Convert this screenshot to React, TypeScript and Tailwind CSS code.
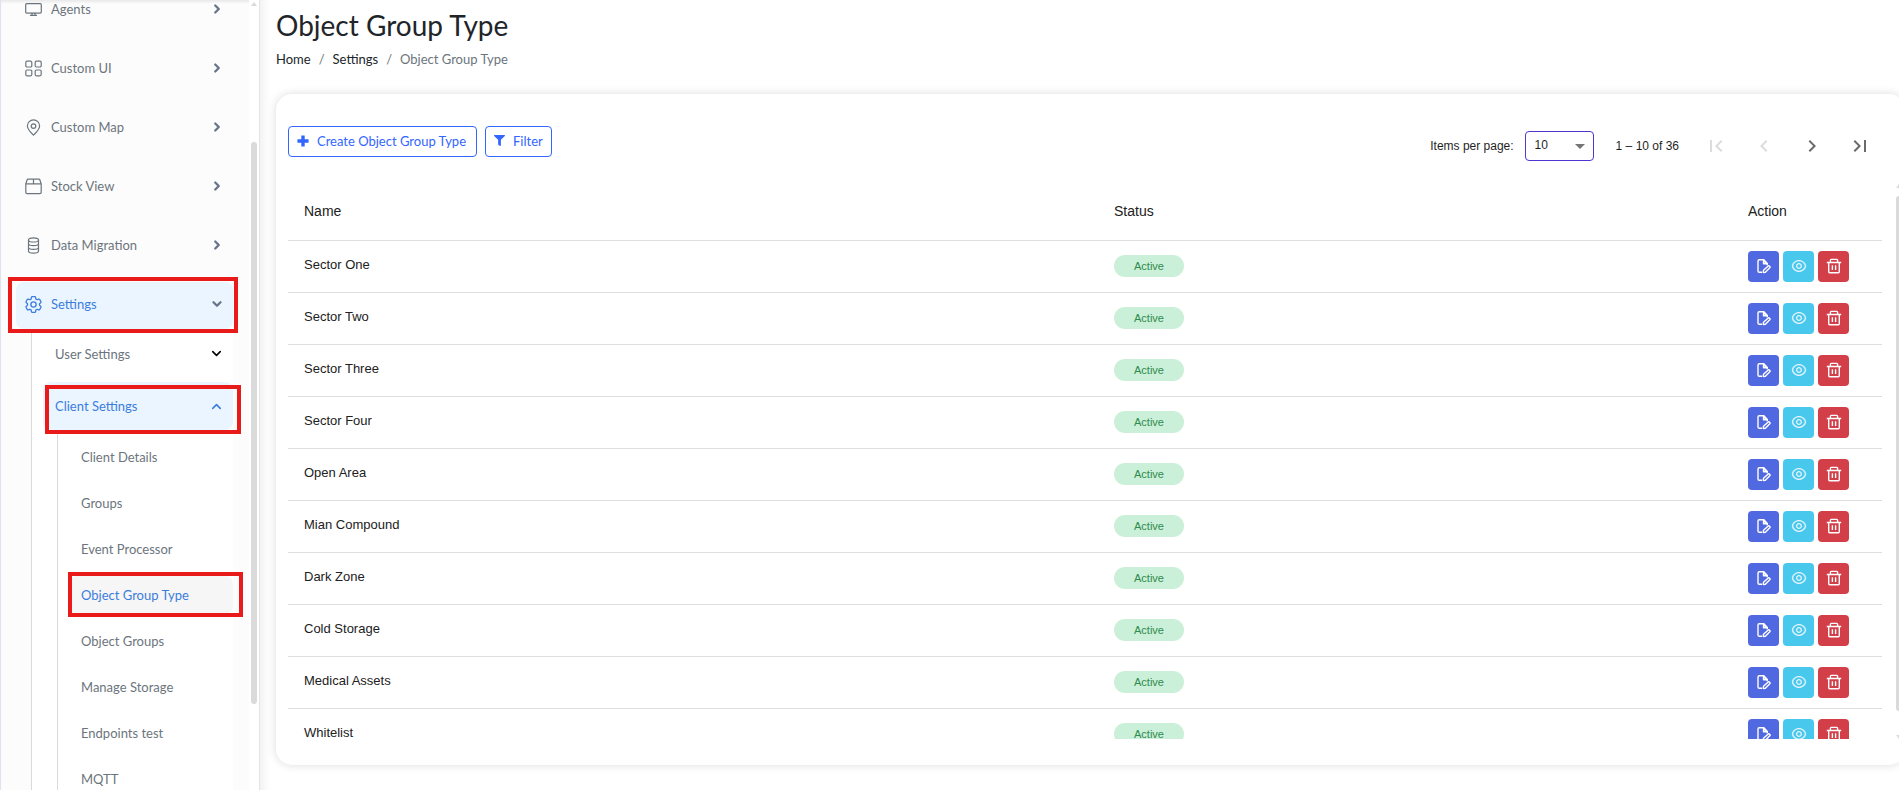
import type { ReactNode } from "react";
import { HiOutlineCog6Tooth } from "react-icons/hi2";
import { RiEyeLine } from "react-icons/ri";
import { FiChevronRight, FiChevronDown, FiChevronUp } from "react-icons/fi";
import { FaFilter } from "react-icons/fa";
import { MdChevronLeft, MdChevronRight, MdFirstPage, MdLastPage, MdArrowDropDown } from "react-icons/md";

function LineIcon({ children }: { children: ReactNode }) {
    return (
        <svg viewBox="0 0 17 17" className="size-[17px] shrink-0" fill="none" stroke="currentColor" strokeWidth="1.2" strokeLinejoin="round" strokeLinecap="round">
            {children}
        </svg>
    );
}

const menu = [
    {
        label: "Agents",
        icon: (
            <LineIcon>
                <rect x=".7" y="2.7" width="15.6" height="9.4" rx="1" />
                <path d="M7 12.2v2M10 12.2v2M5.4 14.3h6.2" />
            </LineIcon>
        ),
    },
    {
        label: "Custom UI",
        icon: (
            <LineIcon>
                <rect x=".8" y="1.2" width="6" height="5.8" rx="1.2" />
                <rect x="10.2" y="1.2" width="6" height="5.8" rx="1.2" />
                <rect x=".8" y="10" width="6" height="5.8" rx="1.2" />
                <rect x="10.2" y="10" width="6" height="5.8" rx="1.2" />
            </LineIcon>
        ),
    },
    {
        label: "Custom Map",
        icon: (
            <LineIcon>
                <path d="M8.5 16.2C6.3 13.7 2.4 10.4 2.4 6.9a6.1 6.1 0 0 1 12.2 0c0 3.5-3.9 6.8-6.1 9.3z" />
                <circle cx="8.5" cy="7.1" r="2.3" />
            </LineIcon>
        ),
    },
    {
        label: "Stock View",
        icon: (
            <LineIcon>
                <path d="M.8 5.8v8.4c0 .9.5 1.4 1.4 1.4h12.6c.9 0 1.4-.5 1.4-1.4V5.8zM.8 5.8 2.2 1.8c.1-.4.4-.6.8-.6h11c.4 0 .7.2.8.6l1.4 4M8.5 1.2v4.6" />
            </LineIcon>
        ),
    },
    {
        label: "Data Migration",
        icon: (
            <LineIcon>
                <ellipse cx="8.5" cy="2.9" rx="5" ry="2.1" />
                <path d="M3.5 2.9v11.2c0 1.2 2.2 2.1 5 2.1s5-.9 5-2.1V2.9M3.5 6.600c0 1.2 2.2 2.1 5 2.1s5-.9 5-2.1M3.5 10.300c0 1.2 2.2 2.1 5 2.1s5-.9 5-2.1" />
            </LineIcon>
        ),
    },
];

const clientItems = [
    "Client Details",
    "Groups",
    "Event Processor",
    "Object Group Type",
    "Object Groups",
    "Manage Storage",
    "Endpoints test",
    "MQTT",
];

const rows = [
    "Sector One",
    "Sector Two",
    "Sector Three",
    "Sector Four",
    "Open Area",
    "Mian Compound",
    "Dark Zone",
    "Cold Storage",
    "Medical Assets",
    "Whitelist",
];

function PlusIcon() {
    return (
        <svg viewBox="0 0 12 12" className="size-3" fill="currentColor">
            <path d="M4.300.8c0-.2.200-.4.400-.4h2.600c.2 0 .4.200.4.400v3.500h3.500c.2 0 .4.200.4.400v2.600c0 .2-.2.400-.4.400H7.700v3.500c0 .2-.2.400-.4.400H4.700c-.2 0-.4-.2-.4-.4V7.700H.8c-.2 0-.4-.2-.4-.4V4.700c0-.2.200-.4.400-.4h3.500z" />
        </svg>
    );
}

function EditIcon() {
    return (
        <svg viewBox="0 0 16 16" className="size-4" fill="none" stroke="currentColor" strokeWidth="1.4" strokeLinejoin="round">
            <path d="M6 14.300H3.300c-.8 0-1.300-.5-1.300-1.300V3c0-.8.500-1.300 1.300-1.300h4.400l3.500 3.800v1.700" />
            <path d="M7.500 1.700v4h3.800z" fill="currentColor" fillOpacity=".6" />
            <path d="M7.200 14.500l.3-2.200 4.700-4.400c.8-.7 2.500.9 1.800 1.700l-4.600 4.600z" />
        </svg>
    );
}

function TrashIcon() {
    return (
        <svg viewBox="0 0 16 16" className="size-4" fill="none" stroke="currentColor" strokeWidth="1.4" strokeLinejoin="round">
            <path d="M.8 4.500h14.400M4.400 4.500V2.200c0-.5.300-.8.800-.8h5.600c.5 0 .8.300.8.800v2.300M2.700 4.500v9.200c0 .6.400 1 1 1h8.600c.6 0 1-.4 1-1V4.500" />
            <path d="M6.400 7.300v4.800M9.600 7.300v4.800" />
        </svg>
    );
}

function Highlight({ className }: { className: string }) {
    return <span className={`pointer-events-none absolute border-4 border-[#e81a1a] ${className}`} />;
}

function MenuItem({ label, icon, active }: { label: string; icon: ReactNode; active?: boolean }) {
    return (
        <a
            href="#"
            className={`relative flex h-[47px] items-center rounded-lg pb-[3px] pl-[9px] pr-[9px] ${active ? "bg-[#ebf5ff] text-[#3b7ddd]" : "text-[#6c757d]"}`}
        >
            {icon}
            <span className="ml-[9px] flex-1">{label}</span>
            {active ? (
                <FiChevronDown size={14} strokeWidth={4} className="text-[#66758a]" />
            ) : (
                <FiChevronRight size={14} strokeWidth={4} className="text-[#66758a]" />
            )}
            {active && <Highlight className="-top-[5px] -right-[5px] -bottom-1 -left-2" />}
        </a>
    );
}

function Sidebar() {
    return (
        <aside className="flex h-screen w-[260px] shrink-0 overflow-hidden border-r border-l border-r-[#e3e5ea] border-l-[#dfe3ef] bg-[#fcfcfc] text-[13px] leading-5 shadow-[inset_0_3px_3px_-1px_rgba(0,0,0,0.08)]">
            <nav className="-mt-[13px] flex-1 pl-[15px] pr-4">
                <div className="flex flex-col gap-3">
                    {menu.map((m) => (
                        <MenuItem key={m.label} label={m.label} icon={m.icon} />
                    ))}
                    <MenuItem
                        label="Settings"
                        icon={<span className="flex size-[17px] items-center justify-center"><HiOutlineCog6Tooth size={21} className="shrink-0" /></span>}
                        active
                    />
                </div>
                <div className="ml-[15px] border-l border-[#dadada] bg-white text-[#6c757d]">
                    <a href="#" className="flex h-[51px] items-center pl-[23px] pr-[9px] pb-[2px]">
                        <span className="flex-1">User Settings</span>
                        <FiChevronDown size={15} strokeWidth={2.500} className="text-black" />
                    </a>
                    <a href="#" className="relative mt-[2px] ml-[11px] flex h-12 items-center rounded-lg bg-[#ebf5ff] pl-3 pr-[9px] text-[#3b7ddd]">
                        <span className="flex-1">Client Settings</span>
                        <FiChevronUp size={15} strokeWidth={2.500} />
                        <Highlight className="top-[3px] -right-2 -bottom-1 left-[2px]" />
                    </a>
                    <ul className="mt-1 ml-[25px]">
                        {clientItems.map((item) => (
                            <li key={item} className="flex h-[46px] flex-col justify-center border-l border-[#dadada] pl-[11px]">
                                {item === "Object Group Type" ? (
                                    <a href="#" className="relative flex h-[38px] items-center rounded-lg bg-[#f6f6f6] pl-3 text-[#3b7ddd]">
                                        {item}
                                        <Highlight className="-top-1 -right-[10px] -bottom-[3px] -left-px" />
                                    </a>
                                ) : (
                                    <a href="#" className="flex h-[38px] items-center pl-3">{item}</a>
                                )}
                            </li>
                        ))}
                    </ul>
                </div>
            </nav>
            <div className="flex w-[10px] flex-col items-center bg-white pt-[2px]">
                <svg viewBox="0 0 6 4" className="h-1 w-[6px]"><path d="M0 4 3 0l3 4z" fill="#dadada" /></svg>
                <div className="mt-[136px] h-[562px] w-[6px] rounded-full bg-[#dadada]" />
            </div>
        </aside>
    );
}

function Paginator() {
    return (
        <div className="flex items-center font-['Liberation_Sans',Arial,sans-serif] text-[12px] text-[#1f1f1f]">
            <label htmlFor="page-size" className="mr-[11px]">Items per page:</label>
            <div className="relative">
                <select id="page-size" className="h-[30px] w-[69px] appearance-none rounded border border-[#4f35d2] bg-white pb-[2px] pl-[9px]">
                    <option>10</option>
                </select>
                <MdArrowDropDown size={24} className="pointer-events-none absolute top-[3px] right-[2px] text-[#757575]" />
            </div>
            <span className="mr-[13px] ml-[22px]">1 – 10 of 36</span>
            <button disabled aria-label="First page" className="flex size-12 items-center justify-center text-[#dcdcdc]"><MdFirstPage size={24} /></button>
            <button disabled aria-label="Previous page" className="flex size-12 items-center justify-center text-[#dcdcdc]"><MdChevronLeft size={24} /></button>
            <button aria-label="Next page" className="flex size-12 items-center justify-center text-[#6b6b6b]"><MdChevronRight size={24} /></button>
            <button aria-label="Last page" className="flex size-12 items-center justify-center text-[#6b6b6b]"><MdLastPage size={24} /></button>
        </div>
    );
}

function GroupTable() {
    return (
        <table className="w-full table-fixed border-collapse text-left font-['Liberation_Sans',Arial,sans-serif] text-[#212121]">
            <colgroup>
                <col />
                <col className="w-[634px]" />
                <col className="w-[150px]" />
            </colgroup>
            <thead>
                <tr className="h-14 border-b border-[#dedede] text-[14px]">
                    <th className="pl-4 font-normal">Name</th>
                    <th className="pl-4 font-normal">Status</th>
                    <th className="pl-4 font-normal">Action</th>
                </tr>
            </thead>
            <tbody>
                {rows.map((name) => (
                    <tr key={name} className="h-[52px] border-b border-[#dedede] text-[13px] leading-4">
                        <td className="pb-[2px] pl-4">{name}</td>
                        <td className="pl-4">
                            <span className="flex h-[22px] w-[70px] items-center justify-center rounded-full bg-[#cbf0d9] text-[11px] text-[#2f8a4c]">Active</span>
                        </td>
                        <td className="pl-4">
                            <div className="flex gap-1 text-white">
                                <button aria-label={`Edit ${name}`} className="flex size-[31px] items-center justify-center rounded bg-[#5068e0]"><EditIcon /></button>
                                <button aria-label={`View ${name}`} className="flex size-[31px] items-center justify-center rounded bg-[#49c8ee] text-[#dff3fa]"><RiEyeLine size={16} /></button>
                                <button aria-label={`Delete ${name}`} className="flex size-[31px] items-center justify-center rounded bg-[#d33f49]"><TrashIcon /></button>
                            </div>
                        </td>
                    </tr>
                ))}
            </tbody>
        </table>
    );
}

export default function App() {
    return (
        <div className="flex h-screen overflow-hidden bg-white font-['Lato',sans-serif]">
            <Sidebar />
            <main className="flex min-w-0 flex-1 flex-col overflow-hidden pb-[25px] pl-4 shadow-[inset_12px_0_12px_-10px_rgba(0,0,0,0.08)]">
                <h1 className="pt-2 text-[28px] leading-[34px] text-[#212529]">Object Group Type</h1>
                <ol className="mt-[7px] flex gap-2 text-[13px] leading-5 text-[#6c757d]">
                    <li><a href="#" className="text-[#212529]">Home</a></li>
                    <li>/</li>
                    <li><a href="#" className="text-[#212529]">Settings</a></li>
                    <li>/</li>
                    <li>Object Group Type</li>
                </ol>
                <section className="mt-[25px] -mr-[6px] flex min-h-0 flex-1 flex-col rounded-2xl bg-white pt-7 pb-[26px] pl-3 shadow-[0_0_10px_rgba(0,0,0,0.14)]">
                    <div className="flex items-start justify-between pr-[21px]">
                        <div className="flex gap-2 pt-1 text-[13px] leading-5 text-[#3366ff]">
                            <button className="flex h-[31px] items-center gap-2 rounded border border-[#3366ff] pr-[10px] pb-[2px] pl-2"><PlusIcon />Create Object Group Type</button>
                            <button className="flex h-[31px] items-center gap-2 rounded border border-[#3366ff] px-2 pb-[2px]"><FaFilter size={11} />Filter</button>
                        </div>
                        <Paginator />
                    </div>
                    <div className="mt-[14px] flex min-h-0 flex-1">
                        <div className="min-w-0 flex-1 overflow-hidden"><GroupTable /></div>
                        <div className="mr-[3px] ml-[14px] flex w-[6px] flex-col">
                            <svg viewBox="0 0 6 4" className="h-1 w-[6px]"><path d="M0 4 3 0l3 4z" fill="#dadada" /></svg>
                            <div className="mt-2 mb-6 flex-1 rounded-full bg-[#dadada]" />
                            <svg viewBox="0 0 6 4" className="h-1 w-[6px]"><path d="M0 0 3 4l3-4z" fill="#dadada" /></svg>
                        </div>
                    </div>
                </section>
            </main>
        </div>
    );
}
